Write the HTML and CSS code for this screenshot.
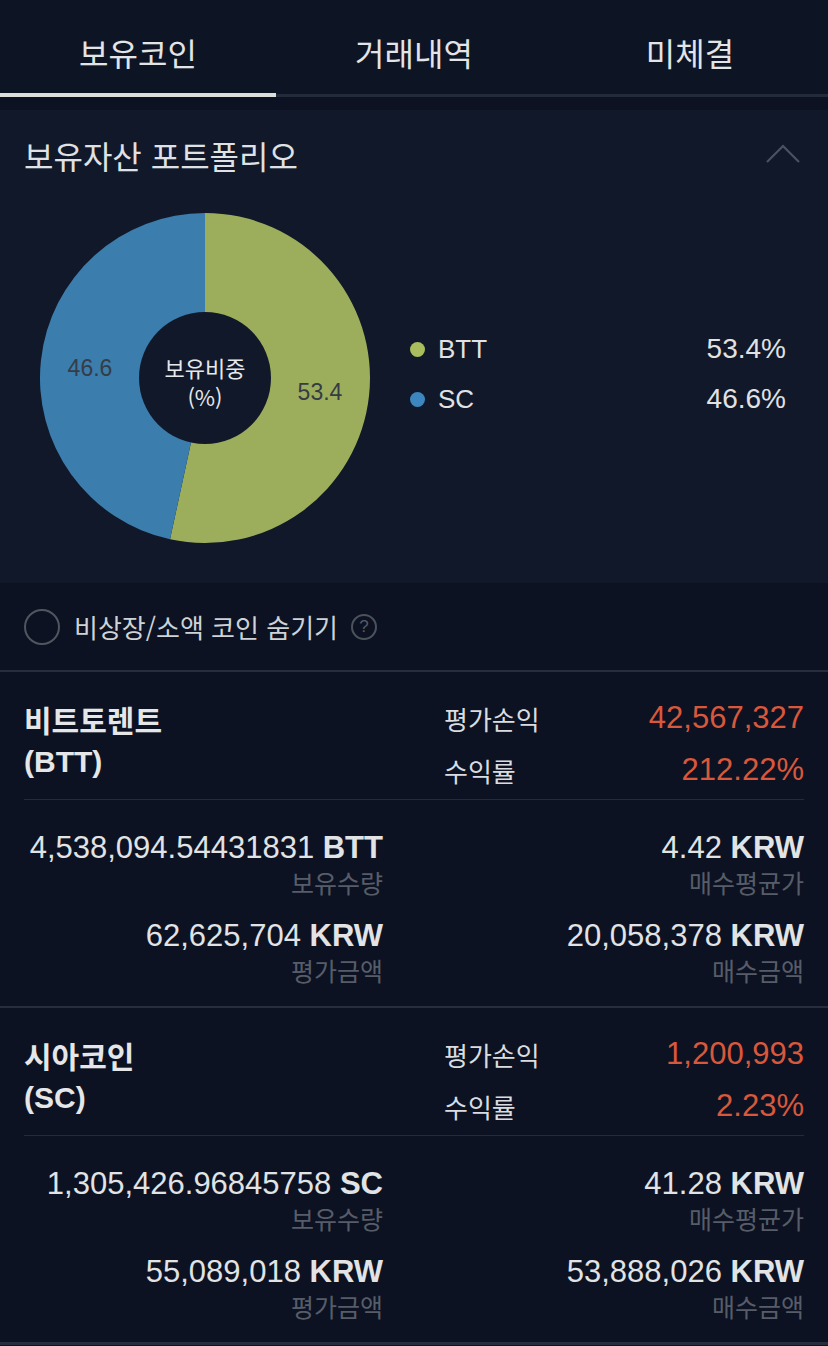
FILE: index.html
```html
<!DOCTYPE html>
<html lang="ko">
<head>
<meta charset="utf-8">
<link rel="stylesheet" href="styles.css">
</head>
<body>
<div class="app">
  <nav class="tabs">
    <div class="tab active">보유코인</div>
    <div class="tab">거래내역</div>
    <div class="tab">미체결</div>
  </nav>
  <div class="tab-line"><div class="tab-line-active"></div><div class="tab-line-rest"></div></div>

  <section class="portfolio">
    <div class="pf-head">
      <h2 class="pf-title">보유자산 포트폴리오</h2>
      <svg class="chev" width="34" height="20" viewBox="0 0 34 20"><polyline points="1,18 17,2 33,18" fill="none" stroke="#4b5161" stroke-width="2.2"/></svg>
    </div>
    <div class="pf-body">
      <svg class="donut" width="330" height="330" viewBox="0 0 330 330">
        <path d="M165,165 L165,0 A165,165 0 1 1 130.02,326.25 Z" fill="#9cae5b"/>
        <path d="M165,165 L130.02,326.25 A165,165 0 0 1 165,0 Z" fill="#3b7dad"/>
        <circle cx="165" cy="165" r="66" fill="#111829"/>
        <text x="50" y="163" class="slice-label" text-anchor="middle">46.6</text>
        <text x="280" y="187" class="slice-label" text-anchor="middle">53.4</text>
        <text x="165" y="164" class="center-label" text-anchor="middle">보유비중</text>
        <text x="165" y="193" class="center-label" text-anchor="middle">(%)</text>
      </svg>
      <ul class="legend">
        <li><span class="dot green"></span><span class="lg-name">BTT</span><span class="lg-val">53.4%</span></li>
        <li><span class="dot blue"></span><span class="lg-name">SC</span><span class="lg-val">46.6%</span></li>
      </ul>
    </div>
  </section>

  <div class="filter">
    <span class="check"></span>
    <span class="filter-text">비상장/소액 코인 숨기기</span>
    <span class="help">?</span>
  </div>

  <section class="coin">
    <div class="coin-head">
      <div class="coin-name">비트토렌트<br>(BTT)</div>
      <div class="pl">
        <span class="pl-label">평가손익</span><span class="pl-val">42,567,327</span>
        <span class="pl-label">수익률</span><span class="pl-val">212.22%</span>
      </div>
    </div>
    <div class="coin-body">
      <div class="cell"><div class="val">4,538,094.54431831 <b>BTT</b></div><div class="lbl">보유수량</div></div>
      <div class="cell"><div class="val">4.42 <b>KRW</b></div><div class="lbl">매수평균가</div></div>
      <div class="cell"><div class="val">62,625,704 <b>KRW</b></div><div class="lbl">평가금액</div></div>
      <div class="cell"><div class="val">20,058,378 <b>KRW</b></div><div class="lbl">매수금액</div></div>
    </div>
  </section>

  <section class="coin">
    <div class="coin-head">
      <div class="coin-name">시아코인<br>(SC)</div>
      <div class="pl">
        <span class="pl-label">평가손익</span><span class="pl-val">1,200,993</span>
        <span class="pl-label">수익률</span><span class="pl-val">2.23%</span>
      </div>
    </div>
    <div class="coin-body">
      <div class="cell"><div class="val">1,305,426.96845758 <b>SC</b></div><div class="lbl">보유수량</div></div>
      <div class="cell"><div class="val">41.28 <b>KRW</b></div><div class="lbl">매수평균가</div></div>
      <div class="cell"><div class="val">55,089,018 <b>KRW</b></div><div class="lbl">평가금액</div></div>
      <div class="cell"><div class="val">53,888,026 <b>KRW</b></div><div class="lbl">매수금액</div></div>
    </div>
  </section>
</div>
</body>
</html>
```

FILE: styles.css
```css
* { box-sizing: border-box; }
html, body { margin: 0; padding: 0; }
body {
  background: #0c1222;
  font-family: "Liberation Sans", "Noto Sans CJK KR", sans-serif;
  color: #dfe1e4;
  width: 828px;
  height: 1346px;
  overflow: hidden;
}
.app { width: 828px; }

.tabs {
  display: flex;
  height: 93px;
  background: #0d1424;
}
.tab {
  flex: 1;
  display: flex;
  align-items: center;
  justify-content: center;
  font-family: "Noto Sans CJK KR", sans-serif;
  font-size: 32px;
  color: #e2e4e6;
  padding-top: 10px;
}
.tab-line {
  display: flex;
  height: 4px;
  background: #0d1424;
}
.tab-line-active { width: 276px; background: #dcdedb; }
.tab-line-rest { flex: 1; background: #232a3a; margin-top: 1px; height: 3px; }

.portfolio {
  margin-top: 13px;
  background: #111829;
  height: 473px;
  padding: 0 42px 0 40px;
}
.pf-head {
  display: flex;
  justify-content: space-between;
  align-items: center;
  height: 90px;
  margin-left: -16px;
  margin-right: -14px;
}
.pf-title {
  margin: 0;
  font-family: "Noto Sans CJK KR", sans-serif;
  font-weight: 400;
  font-size: 32px;
  color: #dfe1e4;
}
.chev { margin-right: 0; margin-top: -2px; }

.pf-body {
  display: flex;
  align-items: center;
  margin-top: 13px;
}
.donut { flex: none; }
.slice-label {
  font-family: "Liberation Sans", sans-serif;
  font-size: 23px;
  fill: #363c46;
}
.center-label {
  font-family: "Noto Sans CJK KR", sans-serif;
  font-size: 22px;
  fill: #e6e8ea;
}
.legend {
  list-style: none;
  margin: -8px 0 0 40px;
  padding: 0;
  flex: 1;
}
.legend li {
  display: flex;
  align-items: center;
  height: 50px;
  font-size: 26px;
  color: #e0e2e4;
}
.dot { width: 15px; height: 15px; border-radius: 50%; margin-right: 13px; }
.dot.green { background: #a9bd5e; }
.dot.blue { background: #3d87c0; }
.lg-name { flex: 1; }
.lg-val { text-align: right; font-size: 28px; }

.filter {
  display: flex;
  align-items: center;
  height: 89px;
  padding: 0 24px;
  border-bottom: 2px solid #262d3c;
}
.check {
  width: 36px;
  height: 36px;
  border-radius: 50%;
  border: 2px solid #50565f;
  margin-right: 14px;
}
.filter-text {
  font-family: "Noto Sans CJK KR", sans-serif;
  font-size: 26px;
  color: #cfd2d6;
}
.help {
  margin-left: 13px;
  width: 26px;
  height: 26px;
  border-radius: 50%;
  border: 2px solid #4c525c;
  color: #565c66;
  font-size: 17px;
  display: flex;
  align-items: center;
  justify-content: center;
}

.coin {
  padding: 0 24px;
  border-bottom: 2px solid #262d3c;
}
.coin:last-child { border-bottom: 3px solid #262d3c; }
.coin-head {
  display: flex;
  justify-content: space-between;
  height: 128px;
  border-bottom: 1px solid #252b3a;
}
.coin-name {
  padding-top: 30px;
  font-family: "Liberation Sans", "Noto Sans CJK KR", sans-serif;
  font-weight: 700;
  font-size: 30px;
  line-height: 40px;
  color: #e4e6e8;
}
.pl {
  display: grid;
  grid-template-columns: auto 1fr;
  grid-auto-rows: 52px;
  align-items: center;
  width: 360px;
  padding-top: 20px;
}
.pl-label {
  font-family: "Noto Sans CJK KR", sans-serif;
  font-size: 26px;
  color: #dadcdf;
}
.pl-val {
  text-align: right;
  font-size: 31px;
  color: #d9583c;
}

.coin-body {
  display: grid;
  grid-template-columns: 359px 1fr;
  row-gap: 20px;
  padding: 31px 0 19px;
}
.cell { text-align: right; }
.val {
  font-size: 31px;
  line-height: 34px;
  color: #e1e3e5;
}
.val b { font-weight: 700; }
.lbl {
  font-family: "Noto Sans CJK KR", sans-serif;
  font-size: 25px;
  line-height: 34px;
  color: #575d68;
}
```
